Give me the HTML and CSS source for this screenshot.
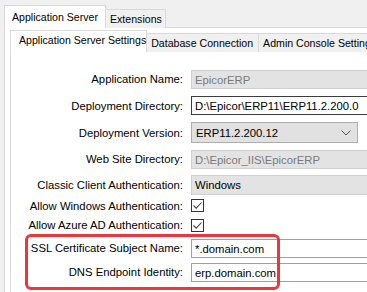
FILE: index.html
```html
<!DOCTYPE html>
<html>
<head>
<meta charset="utf-8">
<link rel="stylesheet" href="styles.css">
</head>
<body>
<div class="outer">
  <div class="tabstrip outer-strip">
    <div class="tab sel">Application Server</div>
    <div class="tab">Extensions</div>
  </div>
  <div class="outer-page">
    <div class="tabstrip inner-strip">
      <div class="tab sel">Application Server Settings</div>
      <div class="tab">Database Connection</div>
      <div class="tab">Admin Console Settings</div>
    </div>
    <div class="inner-page">
      <div class="form">
        <div class="row r1"><label>Application Name:</label><div class="field disabled">EpicorERP</div></div>
        <div class="row r2"><label>Deployment Directory:</label><div class="field active">D:\Epicor\ERP11\ERP11.2.200.0</div></div>
        <div class="row r3"><label>Deployment Version:</label><div class="combo">ERP11.2.200.12<svg class="chev" width="10" height="6" viewBox="0 0 10 6"><path d="M0.5 0.5 L5 5 L9.5 0.5" fill="none" stroke="#555" stroke-width="1"/></svg></div></div>
        <div class="row r4"><label>Web Site Directory:</label><div class="field disabled">D:\Epicor_IIS\EpicorERP</div></div>
        <div class="row r5"><label>Classic Client Authentication:</label><div class="field combo-wide">Windows</div></div>
        <div class="row r6"><label>Allow Windows Authentication:</label><span class="check"><svg width="11" height="11" viewBox="0 0 11 11"><path d="M1.5 5.5 L4.2 8.2 L9.5 2.5" fill="none" stroke="#444" stroke-width="1.1"/></svg></span></div>
        <div class="row r7"><label>Allow Azure AD Authentication:</label><span class="check"><svg width="11" height="11" viewBox="0 0 11 11"><path d="M1.5 5.5 L4.2 8.2 L9.5 2.5" fill="none" stroke="#444" stroke-width="1.1"/></svg></span></div>
        <div class="row r8"><label>SSL Certificate Subject Name:</label><div class="field">*.domain.com</div></div>
        <div class="row r9"><label>DNS Endpoint Identity:</label><div class="field">erp.domain.com</div></div>
      </div>
    </div>
  </div>
</div>
<div class="highlight"></div>
</body>
</html>
```

FILE: styles.css
```css
html, body {
  margin: 0;
  padding: 0;
  width: 367px;
  height: 292px;
  overflow: hidden;
  background: #f0f0f0;
  font-family: "Liberation Sans", Arial, sans-serif;
  font-size: 11.3px;
  color: #000;
}

.outer {
  padding: 4px 0 0 4px;
}

.tabstrip {
  display: flex;
  align-items: flex-end;
  position: relative;
  z-index: 1;
  font-size: 10.6px;
}

.tab {
  box-sizing: border-box;
  white-space: nowrap;
  border: 1px solid #d9d9d9;
  border-bottom: none;
  background: #f0f0f0;
}

.outer-strip .tab {
  height: 19px;
  padding: 3px 3px 0 4px;
  position: relative;
  top: 1px;
  margin-left: -1px;
}

.outer-strip .tab.sel {
  height: 23px;
  background: #fff;
  padding: 5px 0 0 7px;
  margin-left: 0;
  width: 102px;
  z-index: 2;
}

.outer-page {
  background: #fff;
  border: 1px solid #d9d9d9;
  border-right: none;
  height: 300px;
  padding: 1px 0 0 5px;
}

.inner-strip .tab {
  height: 19px;
  padding: 3px 5px 0 4px;
  position: relative;
  top: 1px;
  margin-left: -1px;
}

.inner-strip .tab.sel {
  height: 22px;
  background: #fff;
  padding: 3px 0 0 8px;
  margin-left: 0;
  width: 143px;
  z-index: 2;
}

.inner-page {
  border: 1px solid #d9d9d9;
  border-right: none;
  height: 260px;
  padding-top: 14px;
}

.form {
  display: flex;
  flex-direction: column;
}

.row {
  display: flex;
  align-items: center;
  height: 27px;
  flex: none;
}

.row label {
  width: 172px;
  text-align: right;
  white-space: nowrap;
  flex: none;
}

.row > .field, .row > .combo, .row > .check {
  margin-left: 8px;
}

.r1 { height: 26px; }
.r2 { height: 27px; }
.r3 { height: 27px; }
.r4 { height: 26px; }
.r5 { height: 25px; }
.r6 { height: 17px; }
.r7 { height: 22px; }
.r8 { height: 24px; }
.r9 { height: 24px; }

.field {
  box-sizing: border-box;
  height: 19px;
  width: 200px;
  flex: none;
  border: 1px solid #a0a0a0;
  background: #fff;
  padding: 1px 0 0 3px;
  line-height: 16px;
  white-space: nowrap;
  overflow: hidden;
}

.field.disabled {
  background: #e3e3e3;
  border-color: #cfcfcf;
  color: #7a7a7a;
}

.field.active {
  border-color: #3c3c3c;
}

.field.combo-wide {
  background: #e3e3e3;
  border-color: #cfcfcf;
  height: 20px;
}

.combo {
  box-sizing: border-box;
  height: 21px;
  width: 167px;
  flex: none;
  border: 1px solid #adadad;
  background: #e1e1e1;
  display: flex;
  align-items: center;
  justify-content: space-between;
  padding: 0 6px 0 4px;
}

.check {
  box-sizing: border-box;
  width: 13px;
  height: 13px;
  border: 1px solid #333;
  background: #fff;
  display: flex;
  align-items: center;
  justify-content: center;
}

.highlight {
  position: absolute;
  left: 25px;
  top: 234px;
  width: 255px;
  height: 56px;
  box-sizing: border-box;
  border: 3px solid #e8383d;
  border-radius: 6px;
}
```
